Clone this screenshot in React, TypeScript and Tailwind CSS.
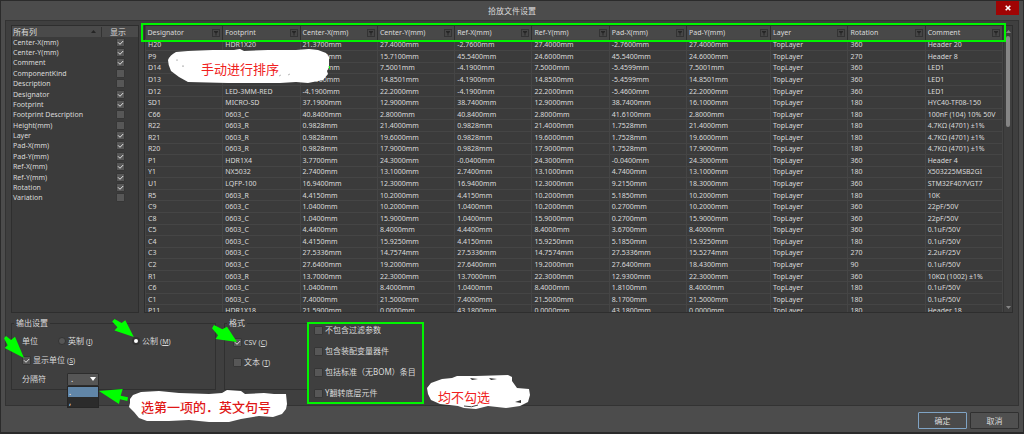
import type { ReactNode } from "react";

const fields: [string, boolean][] = [
  ["Center-X(mm)", true],
  ["Center-Y(mm)", true],
  ["Comment", true],
  ["ComponentKind", false],
  ["Description", false],
  ["Designator", true],
  ["Footprint", true],
  ["Footprint Description", false],
  ["Height(mm)", false],
  ["Layer", true],
  ["Pad-X(mm)", true],
  ["Pad-Y(mm)", true],
  ["Ref-X(mm)", true],
  ["Ref-Y(mm)", true],
  ["Rotation", true],
  ["Variation", false],
];

const columns = [
  "Designator",
  "Footprint",
  "Center-X(mm)",
  "Center-Y(mm)",
  "Ref-X(mm)",
  "Ref-Y(mm)",
  "Pad-X(mm)",
  "Pad-Y(mm)",
  "Layer",
  "Rotation",
  "Comment",
];

// designator, footprint, center x/y, ref x/y, pad x/y (mm), rotation, comment
const parts = [
  ["H20", "HDR1X20", "21.3700", "27.4000", "-2.7600", "27.4000", "-2.7600", "27.4000", "360", "Header 20"],
  ["P9", "HDR1X8", "45.5400", "15.7100", "45.5400", "24.6000", "45.5400", "24.6000", "270", "Header 8"],
  ["D14", "LED-3MM-RED", "-4.1900", "7.5001", "-4.1900", "7.5000", "-5.4599", "7.5001", "360", "LED1"],
  ["D13", "LED-3MM-RED", "-4.1900", "14.8501", "-4.1900", "14.8500", "-5.4599", "14.8501", "360", "LED1"],
  ["D12", "LED-3MM-RED", "-4.1900", "22.2000", "-4.1900", "22.2000", "-5.4600", "22.2000", "360", "LED1"],
  ["SD1", "MICRO-SD", "37.1900", "12.9000", "38.7400", "12.9000", "38.7400", "16.1000", "180", "HYC40-TF08-150"],
  ["C66", "0603_C", "40.8400", "2.8000", "40.8400", "2.8000", "41.6100", "2.8000", "180", "100nF (104) 10% 50V"],
  ["R22", "0603_R", "0.9828", "21.4000", "0.9828", "21.4000", "1.7528", "21.4000", "180", "4.7KΩ (4701) ±1%"],
  ["R21", "0603_R", "0.9828", "19.6000", "0.9828", "19.6000", "1.7528", "19.6000", "180", "4.7KΩ (4701) ±1%"],
  ["R20", "0603_R", "0.9828", "17.9000", "0.9828", "17.9000", "1.7528", "17.9000", "180", "4.7KΩ (4701) ±1%"],
  ["P1", "HDR1X4", "3.7700", "24.3000", "-0.0400", "24.3000", "-0.0400", "24.3000", "360", "Header 4"],
  ["Y1", "NX5032", "2.7400", "13.1000", "2.7400", "13.1000", "4.7400", "13.1000", "180", "X503225MSB2GI"],
  ["U1", "LQFP-100", "16.9400", "12.3000", "16.9400", "12.3000", "9.2150", "18.3000", "360", "STM32F407VGT7"],
  ["R5", "0603_R", "4.4150", "10.2000", "4.4150", "10.2000", "5.1850", "10.2000", "180", "10K"],
  ["C9", "0603_C", "1.0400", "10.2000", "1.0400", "10.2000", "0.2700", "10.2000", "360", "22pF/50V"],
  ["C8", "0603_C", "1.0400", "15.9000", "1.0400", "15.9000", "0.2700", "15.9000", "360", "22pF/50V"],
  ["C5", "0603_C", "4.4400", "8.4000", "4.4400", "8.4000", "3.6700", "8.4000", "360", "0.1uF/50V"],
  ["C4", "0603_C", "4.4150", "15.9250", "4.4150", "15.9250", "5.1850", "15.9250", "180", "0.1uF/50V"],
  ["C3", "0603_C", "27.5336", "14.7574", "27.5336", "14.7574", "27.5336", "15.5274", "270", "2.2uF/25V"],
  ["C2", "0603_C", "27.6400", "19.2000", "27.6400", "19.2000", "27.6400", "18.4300", "90", "0.1uF/50V"],
  ["R1", "0603_R", "13.7000", "22.3000", "13.7000", "22.3000", "12.9300", "22.3000", "360", "10KΩ (1002) ±1%"],
  ["C6", "0603_C", "1.0400", "8.4000", "1.0400", "8.4000", "1.8100", "8.4000", "180", "0.1uF/50V"],
  ["C1", "0603_C", "7.4000", "21.5000", "7.4000", "21.5000", "8.1700", "21.5000", "180", "0.1uF/50V"],
  ["P11", "HDR1X18", "21.5900", "0.0000", "43.1800", "0.0000", "43.1800", "0.0000", "180", "Header 18"],
];

function toCells(part: string[]) {
  return [
    part[0],
    part[1],
    ...part.slice(2, 8).map((value) => `${value}mm`),
    "TopLayer",
    part[8],
    part[9],
  ];
}

function CheckMark({ id, checked = false }: { id: string; checked?: boolean }) {
  return (
    <span className="relative block size-[9px] shrink-0">
      <input
        id={id}
        type="checkbox"
        defaultChecked={checked}
        className="peer block size-[9px] appearance-none rounded-[1px] border border-[#363636] bg-[#575757]"
      />
      <svg
        viewBox="0 0 9 9"
        className="pointer-events-none absolute inset-0 hidden size-[9px] peer-checked:block"
      >
        <path d="M2 4.3 4 6.3 7.2 3" fill="none" stroke="#e2e2e2" />
      </svg>
    </span>
  );
}

function Checkbox({ id, label, checked }: { id: string; label: ReactNode; checked?: boolean }) {
  return (
    <div className="flex items-center gap-0.5">
      <CheckMark id={id} checked={checked} />
      <label htmlFor={id}>{label}</label>
    </div>
  );
}

function Radio({ label, checked = false }: { label: ReactNode; checked?: boolean }) {
  return (
    <label className="flex items-center gap-0.5">
      <input
        type="radio"
        name="unit"
        defaultChecked={checked}
        className="block size-[8px] appearance-none rounded-full border border-[#333] bg-[#565656] checked:border-2 checked:bg-white"
      />
      <span>{label}</span>
    </label>
  );
}

function Hotkey({ letter }: { letter: string }) {
  return (
    <span className="text-[7px]">
      (<u>{letter}</u>)
    </span>
  );
}

function Arrow({ points, box, className }: { points: string; box: string; className: string }) {
  return (
    <svg viewBox={box} className={`pointer-events-none absolute z-20 ${className}`}>
      <polygon points={points} fill="#00ff00" />
    </svg>
  );
}

function FieldList() {
  return (
    <div className="h-72 w-32 shrink-0 border border-[#2e2e2e] bg-[#3b3b3b]">
      <table className="w-full table-fixed border-collapse">
        <thead>
          <tr className="h-[11px] bg-[#4a4a4a] text-[8px] leading-[10px]">
            <th className="pl-px text-left font-normal">
              <div className="flex items-center justify-between border-r border-[#333]">
                所有列
                <svg viewBox="0 0 5 3" className="mr-[5px] h-[3px] w-[5px]">
                  <path d="M0 3 2.5 0 5 3z" fill="#252525" />
                </svg>
              </div>
            </th>
            <th className="w-9 pl-2 text-left font-normal">显示</th>
          </tr>
        </thead>
      </table>
      <table className="h-[166px] w-full table-fixed border-collapse text-[7px] leading-[9px]">
        <tbody>
          {fields.map(([name, shown]) => (
            <tr key={name}>
              <td className="p-0 pl-px">
                <label htmlFor={`show-${name}`} className="block">
                  {name}
                </label>
              </td>
              <td className="w-[22px] p-0">
                <CheckMark id={`show-${name}`} checked={shown} />
              </td>
            </tr>
          ))}
        </tbody>
      </table>
    </div>
  );
}

function PartsTable() {
  return (
    <div className="relative h-72 min-w-0 flex-1">
      <div className="flex h-full overflow-hidden border border-[#2e2e2e] bg-[#3b3b3b]">
        <div className="min-w-0 flex-1">
          <table className="h-[291px] w-full table-fixed border-collapse text-[7px] leading-[9px]">
            <thead>
              <tr className="h-[13px] bg-[#484848]">
                {columns.map((column) => (
                  <th
                    key={column}
                    className={`border-r border-[#2f2f2f] p-0 pt-px pr-[2px] pl-[2px] text-left font-normal whitespace-nowrap ${
                      column === "Pad-Y(mm)" ? "w-[84px]" : ""
                    }`}
                  >
                    <div className="flex items-center justify-between">
                      {column}
                      <svg viewBox="0 0 8 8" className="size-2 shrink-0">
                        <rect x="0.5" y="0.5" width="7" height="7" fill="#464646" stroke="#333" />
                        <path d="M2 2h4v1L4.5 4.2V6.5h-1V4.2L2 3z" fill="#262626" />
                      </svg>
                    </div>
                  </th>
                ))}
              </tr>
            </thead>
            <tbody>
              {parts.map((part) => (
                <tr key={part[0]}>
                  {toCells(part).map((cell, i) => (
                    <td key={i} className="border border-[#454545] p-0 pl-[2px] whitespace-nowrap">
                      {cell}
                    </td>
                  ))}
                </tr>
              ))}
            </tbody>
          </table>
        </div>
        <div className="flex w-[9px] flex-col items-center border-l border-[#353535] bg-[#3f3f3f] pt-1 pb-[3px]">
          <svg viewBox="0 0 5 3" className="h-[3px] w-[5px]">
            <path d="M0 3 2.5 0 5 3z" fill="#858585" />
          </svg>
          <div className="mt-[3px] h-[91px] w-1 rounded-full bg-[#858585]" />
          <svg viewBox="0 0 5 3" className="mt-auto h-[3px] w-[5px]">
            <path d="M0 0 2.5 3 5 0z" fill="#858585" />
          </svg>
        </div>
      </div>
      <div className="pointer-events-none absolute -top-0.5 right-[7px] -left-[3px] h-[19px] border-2 border-[#00f400]" />
      <div className="absolute top-6 left-6 h-[35px] w-[162px]">
        <svg viewBox="0 0 162 35" className="absolute inset-0 size-full">
          <path
            d="M0 11Q2 6 8 3L20 2 45 1 66 1 72 0 76 2 100 1 128 1 141 0 150 1 158 4 161 8 161 18 159 22 160 25 155 31 140 34 128 33 112 34 86 34 60 34 20 33 11 28 3 22Q0 16 0 11z"
            fill="#fff"
          />
          <circle cx="15" cy="17" r="0.6" fill="#444" />
          <circle cx="9" cy="11" r="0.5" fill="#444" />
          <path d="M111 27l2-1M120 26l2-1" stroke="#999" strokeWidth="0.7" />
          <path d="M161 17l1 3" stroke="#00f400" />
        </svg>
        <p className="relative pt-3 pl-[33px] text-[13px] leading-[16px] whitespace-nowrap text-[#f02020]">手动进行排序</p>
      </div>
    </div>
  );
}

function OutputSettings() {
  return (
    <div className="relative w-[205px]">
      <fieldset className="h-[73px] border border-[#303030] px-2.5">
        <legend className="-ml-2 px-0.5 leading-[12px]">输出设置</legend>
        <div className="mt-1.5 flex h-3 items-center">
          <span className="w-9">单位</span>
          <div className="w-[74px]">
            <Radio label={<>英制 <Hotkey letter="I" /></>} />
          </div>
          <Radio label={<>公制 <Hotkey letter="M" /></>} checked />
        </div>
        <div className="mt-[7px] flex h-3 items-center">
          <Checkbox id="show-unit" label={<>显示单位 <Hotkey letter="S" /></>} checked />
        </div>
        <div className="mt-[7px] flex h-3 items-center">
          <label htmlFor="separator" className="w-[45px]">
            分隔符
          </label>
          <span className="relative block">
            <select
              id="separator"
              defaultValue="."
              className="block h-[13px] w-8 appearance-none rounded-[1px] border border-[#2d2d2d] bg-[#565656] pl-[3px] text-[8px] leading-[10px] text-white"
            >
              <option value=".">.</option>
              <option value=",">,</option>
            </select>
            <svg viewBox="0 0 6 4" className="pointer-events-none absolute top-1 right-[3px] h-1 w-1.5">
              <path d="M0 0h6L3 4z" fill="#fff" />
            </svg>
            <ul className="absolute top-[13px] left-0 z-10 w-8 border border-[#262626] bg-[#2b2b2b] leading-[10px] text-white">
              <li className="bg-[#6186a8] pl-px">.</li>
              <li className="pl-px">,</li>
            </ul>
          </span>
        </div>
      </fieldset>
      <Arrow
        box="12 60 60 66"
        points="12,67 18,60 33,72 45,62 72,126 14,96 23,88"
        className="top-[19px] -left-[7px] h-[22px] w-5"
      />
      <Arrow
        box="336 10 66 55"
        points="343,10 365,22 376,14 402,65 343,45 352,35 336,18"
        className="top-0.5 left-[101px] h-[18px] w-[22px]"
      />
      <Arrow
        box="297 237 87 45"
        points="297,243 368,237 362,257 384,262 382,273 360,268 357,282"
        className="top-[72px] left-[88px] h-[15px] w-[29px]"
      />
      <div className="absolute top-[73px] left-[118px] z-10 h-[34px] w-[160px]">
        <svg viewBox="0 0 160 34" className="absolute inset-0 size-full">
          <path
            d="M1 9 4 5 12 2 30 1 50 3 80 4 93 3 98 0 112 1 116 4 135 3 145 4 157 4 158 14 157 19 153 24 144 27 130 26 112 29 100 32 80 32 60 30 40 31 18 31 10 28 5 22 0 17 1 13z"
            fill="#fff"
          />
          <circle cx="14" cy="24" r="0.7" fill="#555" />
        </svg>
        <p className="relative pt-[9px] pl-3 text-[13px] leading-[16px] font-medium whitespace-nowrap text-[#e01818]">
          选第一项的．英文句号
        </p>
      </div>
    </div>
  );
}

function FormatSettings() {
  return (
    <div className="relative ml-2 w-[83px]">
      <fieldset className="h-[73px] border border-r-0 border-[#303030] px-2">
        <legend className="-ml-1.5 px-0.5 leading-[12px]">格式</legend>
        <div className="mt-[7px] flex h-3 items-center">
          <Checkbox
            id="format-csv"
            label={<><span className="text-[7px]">CSV</span> <Hotkey letter="C" /></>}
            checked
          />
        </div>
        <div className="mt-2 flex h-3 items-center">
          <Checkbox id="format-text" label={<>文本 <Hotkey letter="T" /></>} />
        </div>
      </fieldset>
      <Arrow
        box="35 27 75 51"
        points="41,27 66,40 80,32 110,78 46,69 53,58 35,37"
        className="top-2 -left-3 h-[17px] w-[25px]"
      />
    </div>
  );
}

function ExtraOptions() {
  const options = ["不包含过滤参数", "包含装配变量器件", "包括标准（无BOM）条目", "Y翻转底层元件"];

  return (
    <div className="relative mt-[5px] w-[117px]">
      <div className="flex flex-col gap-[9px] border-2 border-[#00f400] px-[5px] pb-[3px] leading-[12px]">
        {options.map((option, i) => (
          <Checkbox key={option} id={`option-${i}`} label={option} />
        ))}
      </div>
      <div className="absolute top-[53px] left-[119px] h-9 w-[105px]">
        <svg viewBox="0 0 105 36" className="absolute inset-0 size-full">
          <path
            d="M1 13 5 8 16 4 26 3 31 1 50 1 82 0 86 2 86 6 91 13 103 14 104 20 102 27 94 31 80 33 62 31 50 34 38 33 32 31 14 29 5 25 2 19z"
            fill="#fff"
          />
          <path d="M89 27l6-2v3zM44 3l8 1-6 1zM63 3l8 1-6 1zM9 13l3-1" fill="#333" />
          <path d="M38 31q8 2 14-1" fill="none" stroke="#444" strokeWidth="1" />
        </svg>
        <p className="relative pt-3.5 pl-3 text-[13px] leading-[16px] whitespace-nowrap text-[#f02020]">均不勾选</p>
      </div>
    </div>
  );
}

export default function App() {
  return (
    <div className="flex min-h-screen flex-col border border-b-2 border-[#2b2b2b] bg-[#4c4c4c] px-1 font-['Noto_Sans','Noto_Sans_CJK_SC',sans-serif] text-[8px] leading-[12px] text-[#dadada]">
      <header className="relative flex h-[19px] items-center justify-center">
        <h1>拾放文件设置</h1>
        <button
          type="button"
          aria-label="关闭"
          className="absolute top-0 right-0 flex h-3.5 w-[23px] items-center justify-center bg-[#a00404]"
        >
          <svg viewBox="0 0 6 6" className="size-1.5">
            <path d="M0.7 0.7 5.3 5.3M5.3 0.7 0.7 5.3" stroke="#fff" strokeWidth="1.6" />
          </svg>
        </button>
      </header>
      <main className="flex-1 border border-[#333] bg-[#3f3f3f] px-[5px] pt-1">
        <div className="flex gap-[5px]">
          <FieldList />
          <PartsTable />
        </div>
        <div className="mt-1 flex items-start">
          <OutputSettings />
          <FormatSettings />
          <ExtraOptions />
        </div>
      </main>
      <footer className="flex justify-end gap-[3px] pt-1.5 pb-[3px]">
        <button
          type="button"
          className="h-[17px] w-[49px] rounded-[1px] border border-[#7fa3c4] bg-[#4a4a4a]"
        >
          确定
        </button>
        <button
          type="button"
          className="h-[17px] w-[49px] rounded-[1px] border border-[#303030] bg-[#505050]"
        >
          取消
        </button>
      </footer>
    </div>
  );
}
